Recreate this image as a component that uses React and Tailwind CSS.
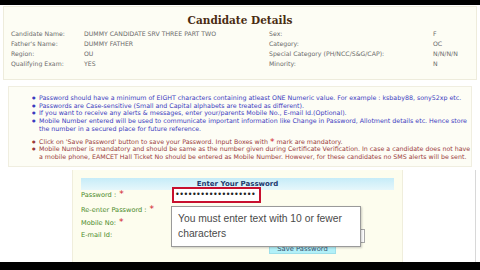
import React from 'react';

const details = [
  ['Candidate Name:', 'DUMMY CANDIDATE SRV THREE PART TWO', 'Sex:', 'F'],
  ["Father's Name:", 'DUMMY FATHER', 'Category:', 'OC'],
  ['Region:', 'OU', 'Special Category (PH/NCC/S&G/CAP):', 'N/N/N/N'],
  ['Qualifying Exam:', 'YES', 'Minority:', 'N'],
];

const Dot = () => <span className="inline-block w-[7px] text-[4px] align-top leading-[7.7px]">●</span>;

const Star = () => <span className="text-[#d0202a] text-[9px] leading-[0] relative -top-[2px] ml-[3px]">*</span>;

export default function App() {
  return (
    <div className="w-[480px] h-[270px] bg-white flex flex-col overflow-hidden" style={{ fontFamily: '"DejaVu Sans", Verdana, sans-serif' }}>
      <div className="h-[5px] bg-black shrink-0" />

      {/* Candidate details */}
      <div className="mx-[3px] mt-[1px] h-[74px] bg-[#fdfdf4] border border-[#eeecdc] shrink-0">
        <div className="text-center font-bold text-[10.5px] text-[#4a2c12] pt-[6px] h-[22px]" style={{ fontFamily: '"DejaVu Serif", Georgia, serif' }}>
          Candidate Details
        </div>
        <div className="grid grid-cols-[73px_185px_164px_1fr] pl-[7px] text-[6.2px] text-[#6b6b6b] leading-[10px]">
          {details.map(([a, b, c, d], i) => (
            <React.Fragment key={i}>
              <div>{a}</div>
              <div>{b}</div>
              <div>{c}</div>
              <div>{d}</div>
            </React.Fragment>
          ))}
        </div>
      </div>

      {/* Instructions */}
      <div className="mx-[8px] mt-[6px] h-[81px] bg-[#fdfdf5] border border-[#f0eee0] pt-[7px] pl-[23px] text-[6.3px] leading-[7.7px] whitespace-nowrap shrink-0">
        <div className="text-[#3b3bbf]">
          <div><Dot />Password should have a minimum of EIGHT characters containing atleast ONE Numeric value. For example : ksbaby88, sony52xp etc.</div>
          <div><Dot />Passwords are Case-sensitive (Small and Capital alphabets are treated as different).</div>
          <div><Dot />If you want to receive any alerts &amp; messages, enter your/parents Mobile No., E-mail Id.(Optional).</div>
          <div><Dot />Mobile Number entered will be used to communicate important information like Change in Password, Allotment details etc. Hence store</div>
          <div className="pl-[7px]">the number in a secured place for future reference.</div>
        </div>
        <div className="text-[#9a3b3b] mt-[5px]">
          <div><Dot />Click on 'Save Password' button to save your Password. Input Boxes with <span className="text-[#d0202a] text-[9px] leading-[0] relative top-[1px]">*</span> mark are mandatory.</div>
          <div><Dot />Mobile Number is mandatory and should be same as the number given during Certificate Verification. In case a candidate does not have</div>
          <div className="pl-[7px]">a mobile phone, EAMCET Hall Ticket No should be entered as Mobile Number. However, for these candidates no SMS alerts will be sent.</div>
        </div>
      </div>

      {/* Password form */}
      <div className="flex flex-1 mt-[3px] pr-[4px]">
        <div className="w-[72px] shrink-0" />
        <div className="w-[330px] shrink-0 bg-[#fdfdee] border-l border-[#f0eedc] pt-[8px] px-[8px] relative">
          <div className="h-[12px] bg-gradient-to-b from-[#c6ecf8] to-[#e6f7fb] text-center font-bold text-[7px] leading-[12px] text-[#1d3a6e]">
            Enter Your Password
          </div>
          <div className="grid grid-cols-[91px_1fr] text-[6.6px] text-[#4a8a2a] mt-[-4px]">
            <div className="h-[14px] flex items-center pt-[6px]">Password :<Star /></div>
            <div className="h-[14px] flex items-start pt-[1px]">
              <div className="w-[89px] h-[16px] border-2 border-[#c8102e] bg-white text-[#222] text-[8px] leading-[11px] tracking-[-0.5px] pl-[1px] overflow-hidden">
                •••••••••••••••••••
              </div>
            </div>
            <div className="h-[14px] flex items-center pt-[8px]">Re-enter Password :<Star /></div>
            <div className="h-[14px]" />
            <div className="h-[13px] flex items-center pt-[6px]">Mobile No:<Star /></div>
            <div className="h-[13px]" />
            <div className="h-[14px] flex items-center pt-[4px]">E-mail Id:</div>
            <div className="h-[14px] flex items-center pt-[4px]">
              <div className="w-[193px] h-[14px] border border-[#a8a8a8] bg-white" />
            </div>
          </div>
          <div className="flex pl-[188px] mt-[1px]">
            <div className="w-[67px] h-[12px] bg-[#b2f0f8] border border-[#9fe0ea] text-[6.8px] leading-[10px] pt-[1px] text-center text-[#3a5470]">
              Save Password
            </div>
          </div>

          {/* Validation tooltip */}
          <div className="absolute left-[98px] top-[36px] w-[190px] h-[41px] bg-white border border-[#9a9a9a] shadow-[1px_1px_2px_rgba(0,0,0,0.2)] pl-[6px] pt-[4px] text-[10.3px] leading-[15px] text-[#4a4a4a]" style={{ fontFamily: '"Liberation Sans", Arial, sans-serif' }}>
            You must enter text with 10 or fewer<br />characters
          </div>
        </div>
        <div className="flex-1 bg-white border-l border-[#f0eedc] border-r border-r-[#d8d8d8]" />
      </div>

      <div className="h-[8px] bg-black shrink-0" />
    </div>
  );
}
